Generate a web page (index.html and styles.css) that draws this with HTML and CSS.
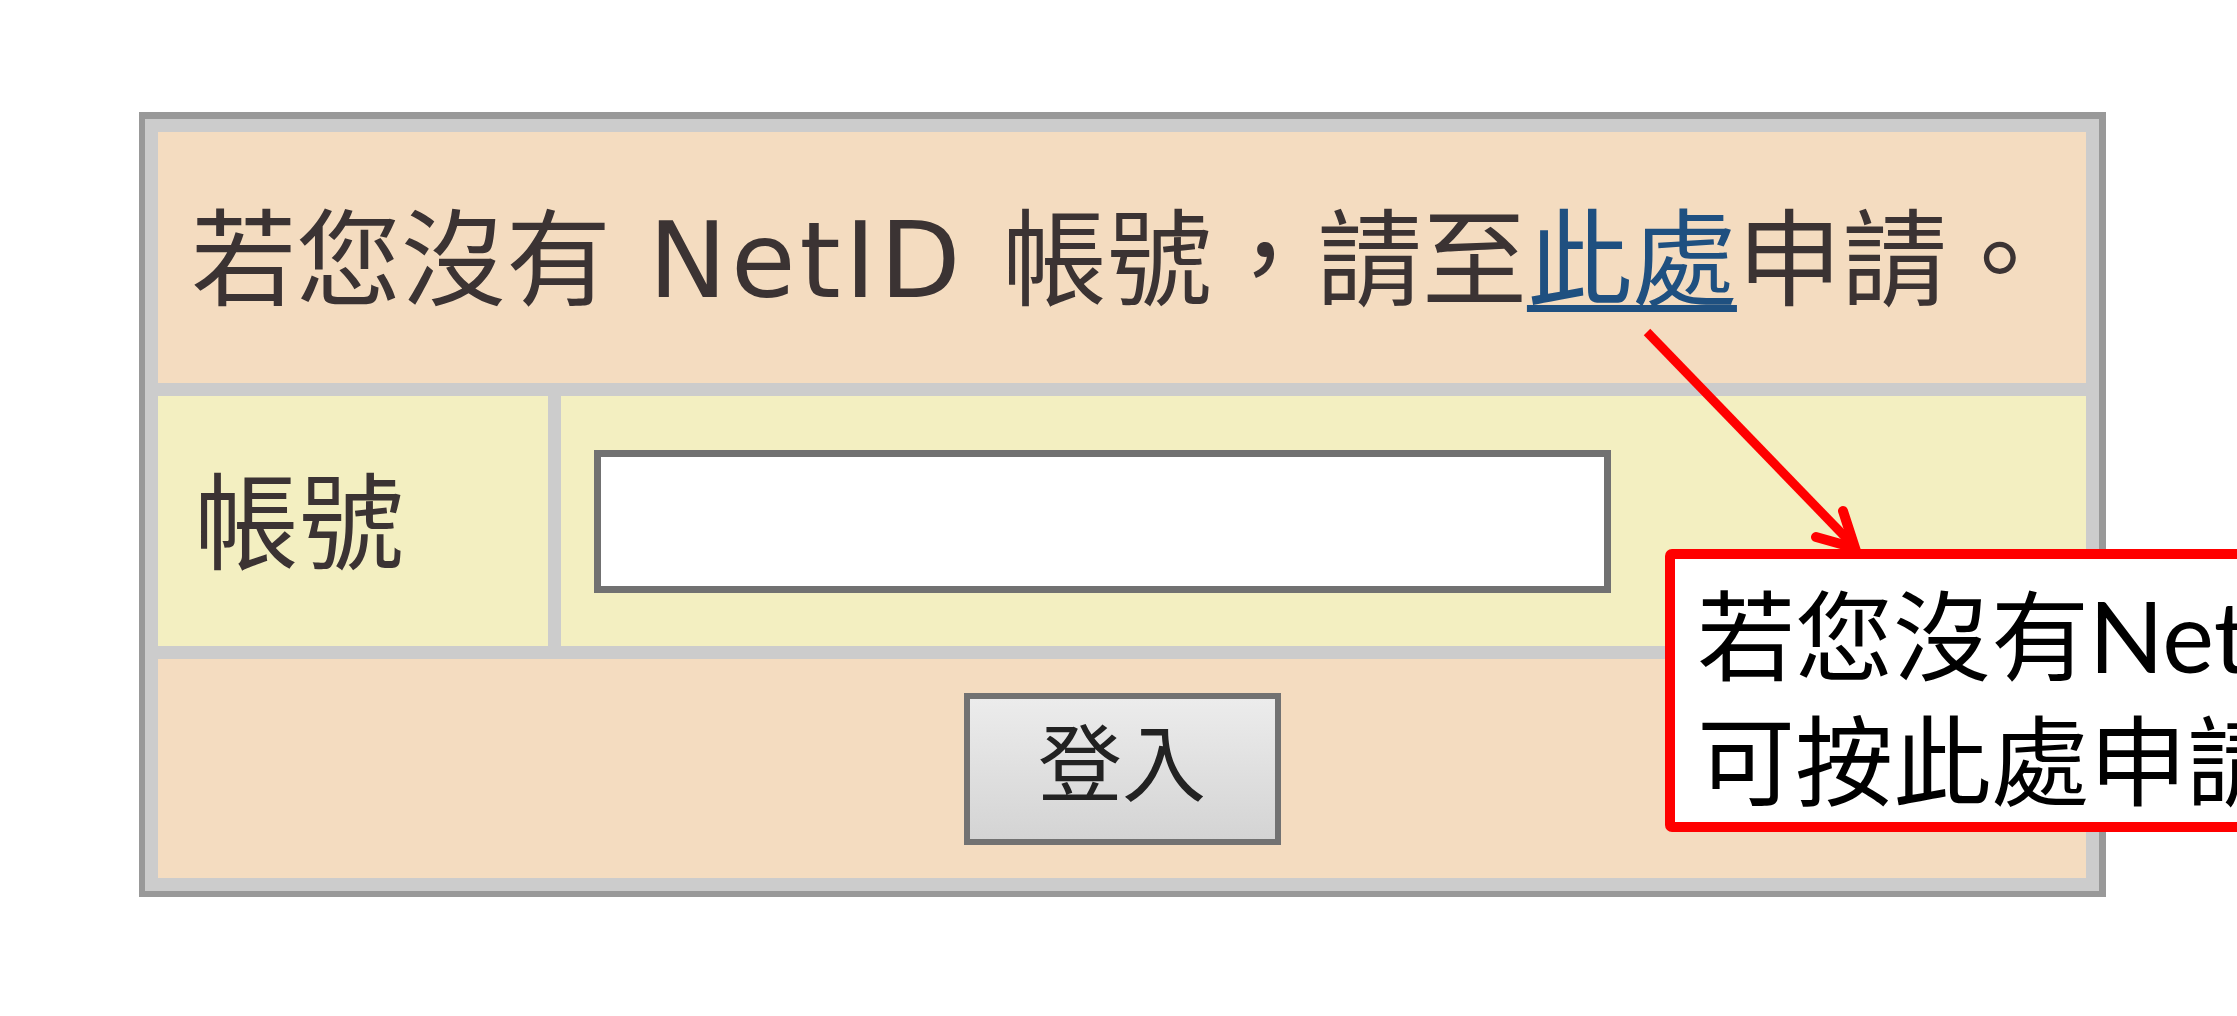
FILE: index.html
```html
<!DOCTYPE html>
<html lang="zh-Hant">
<head>
<meta charset="utf-8">
<title>NetID 登入</title>
<link rel="stylesheet" href="styles.css">
</head>
<body>
<div class="page">
  <div class="login">
    <div class="cell head">若您沒有<span class="latin"> NetID </span>帳號，請至<a class="link">此處</a>申請。</div>
    <div class="cell label">帳號</div>
    <div class="cell field"><input class="input" type="text"></div>
    <div class="cell foot"><button class="btn" type="button">登入</button></div>
  </div>
  <svg class="arrow" width="2237" height="1016" viewBox="0 0 2237 1016" xmlns="http://www.w3.org/2000/svg">
    <line x1="1647" y1="332" x2="1852" y2="544" stroke="#ff0000" stroke-width="9" stroke-linecap="butt"/>
    <polyline points="1843,511 1855,548 1816,537" fill="none" stroke="#ff0000" stroke-width="10" stroke-linecap="round" stroke-linejoin="miter"/>
  </svg>
  <div class="callout">若您沒有<span class="cal-latin">NetID</span>帳號，<br>可按此處申請</div>
</div>
</body>
</html>
```

FILE: styles.css
```css
html, body {
  margin: 0;
  padding: 0;
  overflow: hidden;
  background: #ffffff;
}

.page {
  position: relative;
  width: 2237px;
  height: 1016px;
  box-sizing: border-box;
  padding: 112px 0 0 139px;
  font-family: "DejaVu Sans", "Noto Sans CJK TC", sans-serif;
}

.login {
  display: grid;
  grid-template-columns: 390px 1525px;
  grid-template-rows: 251px 250px 219px;
  gap: 13px;
  padding: 13px;
  width: max-content;
  background: #cccccc;
  border-style: solid;
  border-color: #999999;
  border-width: 7px 7px 6px 6px;
}

.cell {
  display: flex;
  align-items: center;
  box-sizing: border-box;
}

.head {
  grid-column: 1 / -1;
  background: #f4dcc0;
  padding: 8px 0 0 33px;
  font-size: 105px;
  line-height: 1;
  color: #3b3333;
  white-space: nowrap;
}

.latin {
  letter-spacing: 4px;
  white-space: pre;
}

.link {
  color: #1f5080;
  text-decoration: underline;
  text-decoration-thickness: 7px;
  text-underline-offset: 8px;
  text-decoration-skip-ink: none;
}

.label {
  background: #f3efc1;
  padding: 8px 0 0 36px;
  font-size: 105px;
  line-height: 1;
  color: #3b3333;
}

.field {
  background: #f3efc1;
  padding-left: 33px;
}

.input {
  box-sizing: border-box;
  width: 1017px;
  height: 143px;
  margin: 0;
  border: 7px solid #717171;
  background: #ffffff;
  outline: none;
}

.foot {
  grid-column: 1 / -1;
  background: #f4dcc0;
  justify-content: center;
}

.btn {
  box-sizing: border-box;
  width: 317px;
  height: 152px;
  margin: 0;
  padding: 0 0 20px 0;
  border: 6px solid #727272;
  border-radius: 0;
  background: linear-gradient(#ececec, #d4d4d4);
  font-family: "Noto Sans CJK TC", sans-serif;
  font-size: 84px;
  line-height: 1;
  color: #222222;
}

.arrow {
  position: absolute;
  left: 0;
  top: 0;
  pointer-events: none;
}

.callout {
  position: absolute;
  left: 1665px;
  top: 549px;
  width: 1000px;
  height: 283px;
  box-sizing: border-box;
  border: 10px solid #ff0000;
  border-radius: 7px;
  background: #ffffff;
  padding: 11px 0 0 22px;
  font-family: "Noto Sans CJK TC", sans-serif;
  font-size: 98px;
  line-height: 120px;
  color: #000000;
  white-space: nowrap;
}

.cal-latin {
  font-family: Lato, "Noto Sans", sans-serif;
}
```
